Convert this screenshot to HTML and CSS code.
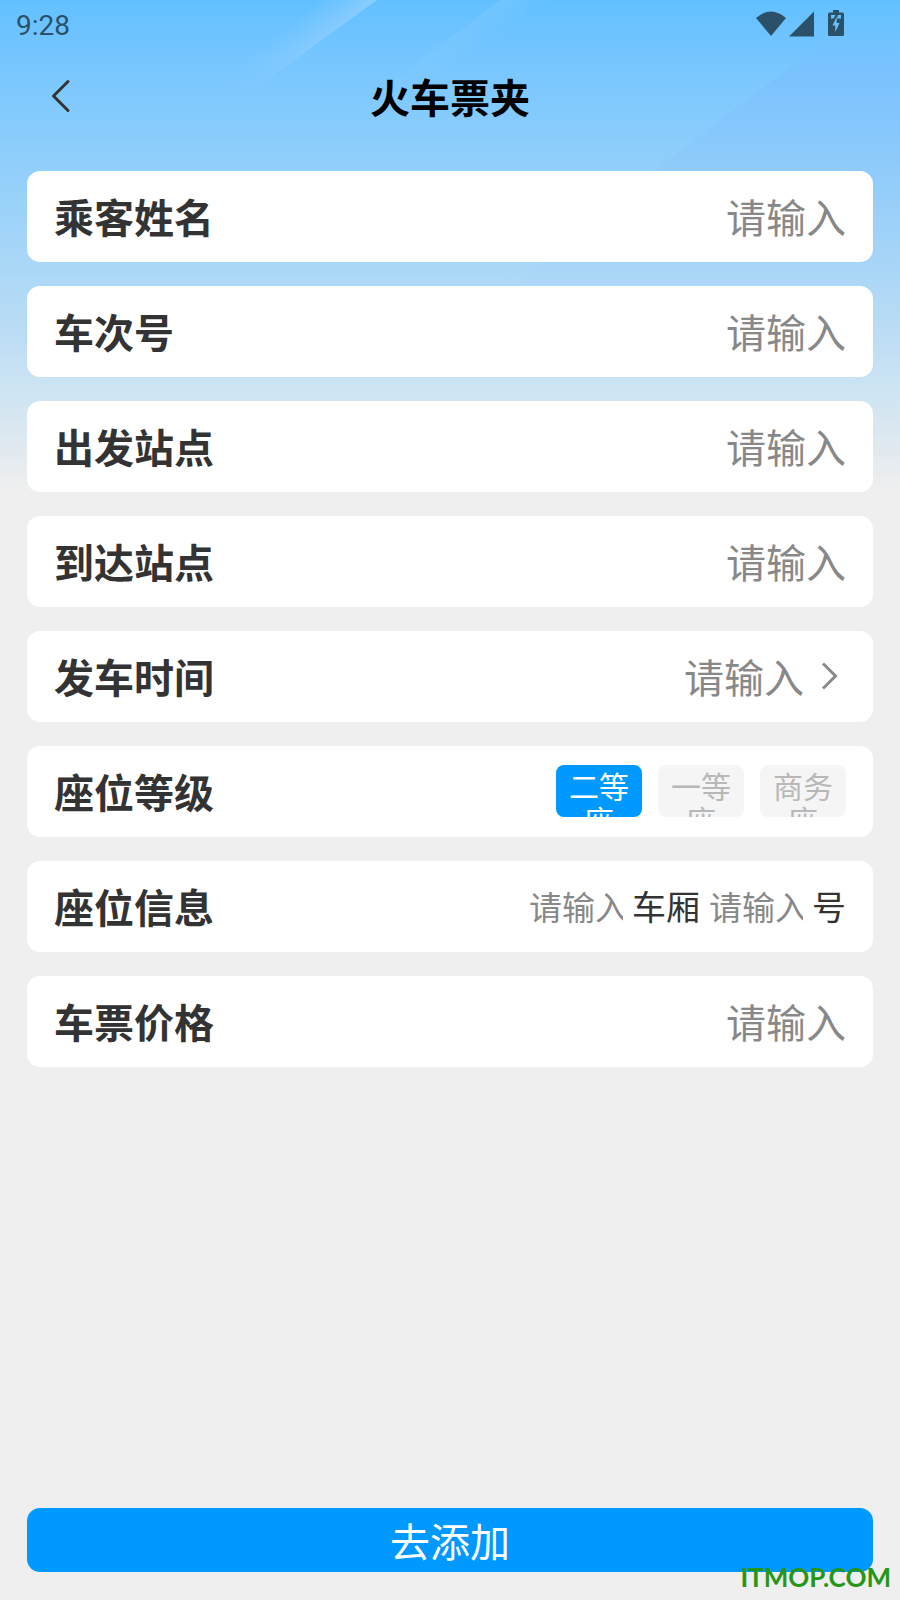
FILE: index.html
```html
<!DOCTYPE html>
<html lang="zh-CN">
<head>
<meta charset="utf-8">
<meta name="viewport" content="width=device-width, initial-scale=1">
<title>火车票夹</title>
<link rel="stylesheet" href="styles.css">
</head>
<body>
<div class="page">
  <svg class="sky" viewBox="0 0 900 490" preserveAspectRatio="none" aria-hidden="true">
    <defs>
      <linearGradient id="base" x1="0" y1="0" x2="0" y2="1">
        <stop offset="0" stop-color="#62c0ff"/>
        <stop offset="0.12" stop-color="#76c6ff"/>
        <stop offset="0.34" stop-color="#91cffb"/>
        <stop offset="0.56" stop-color="#acd8f7"/>
        <stop offset="0.68" stop-color="#bbdcf4"/>
        <stop offset="0.79" stop-color="#cce4f3"/>
        <stop offset="0.9" stop-color="#dee8ef"/>
        <stop offset="1" stop-color="#efefef"/>
      </linearGradient>
      <linearGradient id="ray" gradientUnits="userSpaceOnUse" x1="284" y1="24" x2="308" y2="56">
        <stop offset="0" stop-color="#a0d4ff" stop-opacity="0"/>
        <stop offset="1" stop-color="#a0d4ff" stop-opacity="0.7"/>
      </linearGradient>
      <linearGradient id="fade" gradientUnits="userSpaceOnUse" x1="370" y1="0" x2="235" y2="100">
        <stop offset="0" stop-color="#fff"/>
        <stop offset="0.4" stop-color="#fff" stop-opacity="0.7"/>
        <stop offset="1" stop-color="#fff" stop-opacity="0"/>
      </linearGradient>
      <linearGradient id="thinfade" x1="0" y1="0" x2="0" y2="1">
        <stop offset="0" stop-color="#fff"/>
        <stop offset="0.28" stop-color="#fff" stop-opacity="0"/>
      </linearGradient>
      <mask id="raymask"><rect width="900" height="490" fill="url(#fade)"/></mask>
      <mask id="thinmask"><rect width="900" height="490" fill="url(#thinfade)"/></mask>
      <linearGradient id="tint" x1="0" y1="0" x2="0" y2="1">
        <stop offset="0" stop-color="#7ca8ff" stop-opacity="0"/>
        <stop offset="0.2" stop-color="#7ca8ff" stop-opacity="0.16"/>
        <stop offset="0.5" stop-color="#7ca8ff" stop-opacity="0.1"/>
        <stop offset="1" stop-color="#7ca8ff" stop-opacity="0"/>
      </linearGradient>
      <linearGradient id="thin" gradientUnits="userSpaceOnUse" x1="440" y1="45" x2="458" y2="70">
        <stop offset="0" stop-color="#a4d8ff" stop-opacity="0.22"/>
        <stop offset="1" stop-color="#a4d8ff" stop-opacity="0"/>
      </linearGradient>
    </defs>
    <rect width="900" height="490" fill="url(#base)"/>
    <path d="M377 0L220 114L150 130L325 0Z" fill="url(#ray)" mask="url(#raymask)"/>
    <path d="M500 0L310 145L380 145L570 0Z" fill="url(#thin)" mask="url(#thinmask)"/>
    <path d="M900 14L860 14L660 166L470 320L900 320Z" fill="url(#tint)"/>
  </svg>

  <div class="statusbar">
    <span class="clock">9:28</span>
    <svg class="indicators" viewBox="0 0 90 28" aria-hidden="true">
      <path d="M0 8Q15 -5 30 8L15 26Z"/>
      <path d="M33 26.500L58 1.500V26.500Z"/>
      <path fill-rule="evenodd" d="M77 0H83V2.500H86.500Q88 2.500 88 4V24.500Q88 26 86.500 26H73.500Q72 26 72 24.500V4Q72 2.500 73.500 2.500H77ZM75 5V8.500H77.500L79.500 5ZM82 5L81 8.500H85V5ZM80.500 7L76.500 15.500H79.300V22L83.500 13H80.700V7Z"/>
    </svg>
  </div>

  <header class="titlebar">
    <button class="back" type="button" aria-label="返回">
      <svg viewBox="0 0 20 34" aria-hidden="true"><path d="M17 2.500L2.500 17L17 31.500"/></svg>
    </button>
    <h1>火车票夹</h1>
  </header>

  <form class="form">
    <div class="row"><label for="name">乘客姓名</label><input id="name" class="field" type="text" placeholder="请输入"></div>
    <div class="row"><label for="train">车次号</label><input id="train" class="field" type="text" placeholder="请输入"></div>
    <div class="row"><label for="from">出发站点</label><input id="from" class="field" type="text" placeholder="请输入"></div>
    <div class="row"><label for="to">到达站点</label><input id="to" class="field" type="text" placeholder="请输入"></div>
    <div class="row">
      <span class="label" id="time-label">发车时间</span>
      <button class="picker" type="button" aria-labelledby="time-label">
        <span>请输入</span>
        <svg viewBox="0 0 18 28" aria-hidden="true"><path d="M1 1.500L13.500 14L1 26.500"/></svg>
      </button>
    </div>
    <div class="row">
      <span class="label">座位等级</span>
      <div class="grades">
        <button class="grade selected" type="button">二等座</button>
        <button class="grade" type="button">一等座</button>
        <button class="grade" type="button">商务座</button>
      </div>
    </div>
    <div class="row">
      <span class="label">座位信息</span>
      <div class="seat">
        <input id="coach" type="text" placeholder="请输入"><label for="coach">车厢</label>
        <input id="seat" type="text" placeholder="请输入"><label for="seat">号</label>
      </div>
    </div>
    <div class="row"><label for="price">车票价格</label><input id="price" class="field" type="text" placeholder="请输入"></div>
    <button class="submit" type="submit">去添加</button>
  </form>
  <div class="watermark">ITMOP.COM</div>
</div>
</body>
</html>
```
FILE: styles.css
```css
* { box-sizing: border-box; }

body {
  margin: 0;
  background: #efefef;
  color: #333;
  font-family: "Noto Sans CJK SC", sans-serif;
}

button, input {
  margin: 0;
  padding: 0;
  border: 0;
  border-radius: 0;
  background: none;
  color: inherit;
  font: inherit;
}

.page {
  position: relative;
  display: flex;
  flex-direction: column;
  min-height: 100vh;
}

.sky {
  position: absolute;
  top: 0;
  left: 0;
  z-index: -1;
  width: 100%;
  height: 490px;
}

.statusbar {
  display: flex;
  justify-content: space-between;
  align-items: center;
  height: 50px;
  padding: 0 54px 0 16px;
  color: #2b5168;
}

.clock {
  padding-top: 2px;
  font-family: Roboto, sans-serif;
  font-size: 28px;
  line-height: 32px;
}

.indicators {
  width: 90px;
  height: 28px;
  margin-bottom: 2px;
  fill: #2b5168;
}

.titlebar {
  display: grid;
  grid-template-columns: 71px 1fr 71px;
  align-items: center;
  height: 94px;
  padding-bottom: 2px;
}

.back {
  display: flex;
  justify-content: flex-end;
  align-items: center;
  height: 64px;
}

.back svg { width: 20px; height: 34px; }

.back path, .picker path {
  fill: none;
  stroke: #333;
  stroke-width: 3;
  stroke-linecap: round;
  stroke-linejoin: round;
}

h1 {
  margin: 0;
  color: #000;
  font-size: 40px;
  line-height: 60px;
  text-align: center;
}

.form {
  display: flex;
  flex: 1;
  flex-direction: column;
  gap: 24px;
  padding: 27px 27px 28px;
}

.row {
  display: flex;
  justify-content: space-between;
  align-items: center;
  height: 91px;
  padding: 0 27px 1px;
  border-radius: 13px;
  background: #fff;
  font-size: 40px;
  line-height: 60px;
}

.row > label, .label { font-weight: 700; white-space: nowrap; }

.field {
  flex: 1;
  min-width: 0;
  height: 60px;
  text-align: right;
}

input::placeholder { color: #888; opacity: 1; }

.picker {
  display: flex;
  align-items: center;
  gap: 18px;
  padding-right: 6px;
  color: #888;
}

.picker svg { width: 18px; height: 28px; }

.picker path { stroke: #888; stroke-linecap: butt; stroke-linejoin: miter; }

.grades { display: flex; gap: 16px; }

.grade {
  display: flex;
  justify-content: center;
  width: 86px;
  height: 52px;
  padding: 3px 12px 0;
  overflow: hidden;
  border-radius: 8px;
  background: #f5f5f5;
  color: #b8b8b8;
  font-size: 30px;
  line-height: 34px;
}

.grade.selected { background: #0099ff; color: #fff; }

.seat {
  display: flex;
  align-items: center;
  gap: 9px;
  font-size: 34px;
  line-height: 50px;
}

.seat input { width: 94px; height: 50px; font-size: 33px; }

.submit {
  height: 64px;
  margin-top: auto;
  border-radius: 13px;
  background: #0099ff;
  color: #fff;
  font-size: 40px;
  line-height: 60px;
}

.watermark {
  position: absolute;
  right: 9px;
  bottom: 5px;
  color: #259616;
  font-family: Lato, "Open Sans", sans-serif;
  font-size: 26px;
  font-weight: 700;
  line-height: 36px;
}
```
